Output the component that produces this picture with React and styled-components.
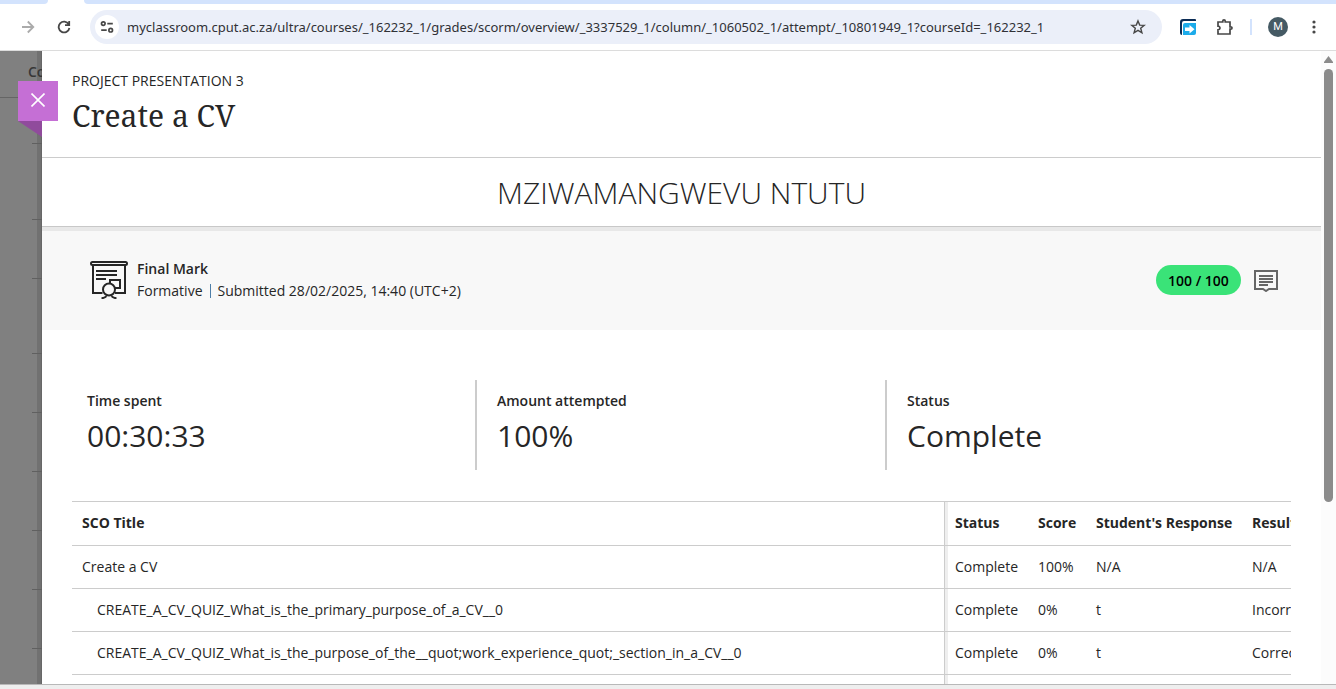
import React from "react";
import styled, { createGlobalStyle, css } from "styled-components";

const GlobalStyle = createGlobalStyle`
  *, *::before, *::after { box-sizing: border-box; }
  body { margin: 0; background: #fff; color: #262626; font: 14px/20px "Open Sans", sans-serif; overflow: hidden; }
  h1, h2, p, dl, dt, dd { margin: 0; font-weight: 400; }
  button { border: 0; padding: 0; background: none; font: inherit; color: inherit; cursor: pointer; }
`;

const Window = styled.div`
  display: flex;
  flex-direction: column;
  height: 100vh;
`;

/* Browser bar */
const TabStrip = styled.div`
  height: 4px;
  flex: none;
  display: flex;
  gap: 36px;
  background: #fff;
`;
const TabEdge = styled.div`
  height: 4px;
  background: #d3e3fd;
  ${(p) => (p.$fill ? css`flex: 1; border-bottom-left-radius: 4px;` : css`width: 48px; border-bottom-right-radius: 4px;`)}
`;
const Toolbar = styled.header`
  height: 47px;
  flex: none;
  display: flex;
  align-items: center;
  padding: 0 10px 0 16px;
  border-bottom: 1px solid #dcdcdc;
  background: #fff;
  color: #474747;
`;
const IconButton = styled.button`
  display: grid;
  place-items: center;
  flex: none;
  width: 24px;
  height: 24px;
  margin-left: ${(p) => p.$gap || 0}px;
  color: ${(p) => p.$color || "#474747"};
`;
const Address = styled.div`
  flex: 1;
  min-width: 0;
  height: 34px;
  margin-left: 14px;
  padding: 0 12px 0 5px;
  display: flex;
  align-items: center;
  border-radius: 17px;
  background: #ebeff9;
`;
const SiteInfo = styled(IconButton)`
  border-radius: 50%;
  background: #fff;
`;
const Url = styled.input`
  flex: 1;
  min-width: 0;
  margin: 0 0 0 8px;
  padding: 0;
  border: 0;
  outline: 0;
  background: none;
  color: #303136;
  font: 13px/20px "Noto Sans", sans-serif;
`;
const Separator = styled.span`
  width: 2px;
  height: 16px;
  margin-left: 13px;
  background: #d3e3fd;
`;
const Avatar = styled.button`
  width: 20px;
  height: 20px;
  margin-left: 16px;
  border-radius: 50%;
  background: #455a64;
  color: #fff;
  font: 400 11px/20px Roboto, sans-serif;
`;

/* Page behind the panel */
const Stage = styled.div`
  position: relative;
  flex: 1;
  min-height: 0;
  display: flex;
`;
const Behind = styled.aside`
  width: 42px;
  flex: none;
  overflow: hidden;
  background: linear-gradient(90deg, #808080 37px, #717171 37px, #717171 41px, #676767 41px);
`;
const BehindHeader = styled.div`
  height: 47px;
  padding: 11px 0 0 28px;
  border-bottom: 1px solid #656565;
  color: #373737;
  font-weight: 600;
  white-space: nowrap;
`;
const BehindRow = styled.div`
  height: ${(p) => p.$height}px;
  margin-left: 32px;
  border-bottom: 1px solid #606060;
`;

/* Panel */
const Panel = styled.main`
  flex: 1;
  min-width: 0;
  overflow: hidden;
  background: #fff;
`;
const CloseTab = styled.button`
  position: absolute;
  left: 18px;
  top: 30px;
  width: 40px;
  height: 40px;
  padding-bottom: 2px;
  display: grid;
  place-items: center;
  background: #c56fd5;
  color: #fff;
  &::after {
    content: "";
    position: absolute;
    left: 0;
    top: 40px;
    width: 24px;
    height: 16px;
    background: #904b9c;
    clip-path: polygon(0 0, 100% 0, 100% 100%);
  }
`;
const PanelHeader = styled.header`
  height: 107px;
  padding: 20px 30px 0;
  border-bottom: 1px solid #ccc;
`;
const Title = styled.h1`
  font: 30px/40px "Noto Serif", "DejaVu Serif", serif;
  margin-top: 5px;
`;
const StudentName = styled.h2`
  height: 69px;
  border-bottom: 1px solid #c8c8c8;
  text-align: center;
  font-size: 30px;
  line-height: 70px;
  font-weight: 300;
`;
const MarkBar = styled.section`
  height: 103px;
  padding: 0 43px 2px 48px;
  display: flex;
  align-items: center;
  border-top: 4px solid #e8e8e8;
  background: #f8f8f8;
`;
const MarkText = styled.div`
  flex: 1;
  margin-left: 9px;
  line-height: 22px;
`;
const Strong = styled.p`
  font-weight: 600;
`;
const Meta = styled.p`
  display: flex;
  align-items: center;
`;
const Rule = styled.span`
  width: 1px;
  height: 14px;
  margin: 0 7px;
  background: #4d7ea8;
`;
const Score = styled.span`
  width: 85px;
  height: 30px;
  margin-right: 13px;
  border-radius: 15px;
  background: #3ae378;
  color: #000;
  font-weight: 600;
  line-height: 32px;
  text-align: center;
`;
const Stats = styled.dl`
  display: grid;
  grid-template-columns: repeat(3, 1fr);
  padding: 50px 25px 31px 24px;
`;
const Stat = styled.div`
  height: 90px;
  padding: 11px 0 0 21px;
  & + & { border-left: 2px solid #ccc; margin-left: -1px; padding-left: 20px; }
`;
const StatLabel = styled.dt`
  font-weight: 600;
`;
const StatValue = styled.dd`
  margin-top: 5px;
  font-size: 30px;
  line-height: 40px;
`;
const TableClip = styled.div`
  margin: 0 30px;
  overflow: hidden;
`;
const Table = styled.table`
  width: calc(100% + 60px);
  table-layout: fixed;
  border-collapse: separate;
  border-spacing: 0;
  border-top: 1px solid #ccc;
`;
const cell = css`
  height: 43px;
  padding: 0 10px;
  border-bottom: 1px solid #ccc;
  text-align: left;
  white-space: nowrap;
  &:first-child { border-right: 1px solid #ccc; box-shadow: 3px 0 0 #eee; }
`;
const Th = styled.th`
  ${cell}
  height: 44px;
  padding-bottom: 2px;
  width: ${(p) => (p.$width ? p.$width + "px" : "auto")};
  font-weight: 700;
`;
const Td = styled.td`
  ${cell}
  padding-left: ${(p) => (p.$nested ? 25 : 10)}px;
`;

const Scrollbar = styled.div`
  width: 15px;
  flex: none;
  display: flex;
  flex-direction: column;
  align-items: center;
  gap: 6px;
  padding-top: 5px;
  background: #fcfcfc;
`;
const Thumb = styled.div`
  width: 9px;
  height: 69%;
  border-radius: 5px;
  background: #8b8b8b;
`;
const WindowEdge = styled.footer`
  height: 5px;
  flex: none;
  border-top: 1px solid #b8b8b8;
  background: #eee;
`;

const Svg = ({ w = 16, h = w, box = `0 0 ${w} ${h}`, sw = 1.7, children }) => (
  <svg width={w} height={h} viewBox={box} fill="none" stroke="currentColor" strokeWidth={sw} aria-hidden="true">
    {children}
  </svg>
);

const rowsBehind = [46, 76, 59, 75, 59, 59, 59, 59, 59];

const stats = [
  ["Time spent", "00:30:33"],
  ["Amount attempted", "100%"],
  ["Status", "Complete"],
];

const columns = [
  ["SCO Title"],
  ["Status", 83],
  ["Score", 58],
  ["Student's Response", 156],
  ["Result", 109],
];

const results = [
  ["Create a CV", "Complete", "100%", "N/A", "N/A"],
  ["CREATE_A_CV_QUIZ_What_is_the_primary_purpose_of_a_CV__0", "Complete", "0%", "t", "Incorrect"],
  ["CREATE_A_CV_QUIZ_What_is_the_purpose_of_the__quot;work_experience_quot;_section_in_a_CV__0", "Complete", "0%", "t", "Correct"],
  ["", "", "", "", ""],
];

function BrowserBar() {
  return (
    <>
      <TabStrip><TabEdge /><TabEdge $fill /></TabStrip>
      <Toolbar>
        <IconButton aria-label="Forward" $color="#ababab">
          <Svg w={14} sw={1.8}><path d="M1 7h11M6.8 1.5 12.3 7l-5.5 5.5" /></Svg>
        </IconButton>
        <IconButton aria-label="Reload" $gap={12}>
          <Svg w={14} sw={1.8}><path d="M11.7 4.2A5.4 5.4 0 1 0 12.4 8M12.2 1v4.2H8" /></Svg>
        </IconButton>
        <Address>
          <SiteInfo aria-label="Site information">
            <Svg w={14} sw={1.7}>
              <circle cx="3.3" cy="3.6" r="1.8" /><path d="M7.3 3.6h5.5M1.2 10.2h5.5" /><circle cx="10.7" cy="10.2" r="1.8" />
            </Svg>
          </SiteInfo>
          <Url aria-label="Address" readOnly value="myclassroom.cput.ac.za/ultra/courses/_162232_1/grades/scorm/overview/_3337529_1/column/_1060502_1/attempt/_10801949_1?courseId=_162232_1" />
          <IconButton aria-label="Bookmark this page">
            <Svg w={16} sw={1.4}><path d="m8 1.9 1.7 4.2 4.5.3-3.5 2.9 1.2 4.5L8 11.3l-3.9 2.5 1.2-4.5-3.5-2.9 4.5-.3z" /></Svg>
          </IconButton>
        </Address>
        <IconButton aria-label="File transfer extension" $gap={14}>
          <svg width="16" height="16" viewBox="0 0 16 16" aria-hidden="true">
            <path d="M3 0h12a1 1 0 0 1 1 1v1H4a2 2 0 0 0-2 2v12a2 2 0 0 1-2-2V3a3 3 0 0 1 3-3z" fill="#0b2c55" />
            <path d="M5 4h11v10a2 2 0 0 1-2 2H3V6a2 2 0 0 1 2-2z" fill="#1cabea" />
            <path d="M5 8.500h4.500V6l5 4.300-5 4.200V12H5z" fill="#fff" />
          </svg>
        </IconButton>
        <IconButton aria-label="Extensions" $gap={13}>
          <Svg w={18} sw={1.7}><path d="M2 4h4.800V3a1.200 1.200 0 0 1 2.400 0v1H14v4.800h.8a1.200 1.200 0 0 1 0 2.400H14V16H2v-4.200c2.6 0 2.6-3.6 0-3.600z" /></Svg>
        </IconButton>
        <Separator />
        <Avatar aria-label="Profile">M</Avatar>
        <IconButton aria-label="Menu" $gap={14}>
          <svg width="4" height="14" viewBox="0 0 4 14" fill="#474747" aria-hidden="true">
            <circle cx="2" cy="2" r="1.6" /><circle cx="2" cy="7" r="1.6" /><circle cx="2" cy="12" r="1.6" />
          </svg>
        </IconButton>
      </Toolbar>
    </>
  );
}

export default function App() {
  return (
    <Window>
      <GlobalStyle />
      <BrowserBar />
      <Stage>
        <Behind>
          <BehindHeader>Co</BehindHeader>
          {rowsBehind.map((height, i) => <BehindRow key={i} $height={height} />)}
        </Behind>
        <Panel>
          <PanelHeader>
            <p>PROJECT PRESENTATION 3</p>
            <Title>Create a CV</Title>
          </PanelHeader>
          <StudentName>MZIWAMANGWEVU NTUTU</StudentName>
          <MarkBar>
            <Svg w={38} h={39} sw={2}>
              <rect x="1" y="2" width="36" height="3" rx="1.5" />
              <path d="M3 5.5V33h9.500M35 5.500V33H25M6 11h21M6 15h21M6 19h10M20 23v-3h10v8h-5" />
              <circle cx="19" cy="29.500" r="6" />
              <path d="M11.500 38.200c2-.1 4-.8 5-2M26.500 38.200c-2-.1-4-.8-5-2" />
            </Svg>
            <MarkText>
              <Strong>Final Mark</Strong>
              <Meta>Formative<Rule />Submitted 28/02/2025, 14:40 (UTC+2)</Meta>
            </MarkText>
            <Score>100 / 100</Score>
            <IconButton aria-label="View feedback" $color="#666">
              <Svg w={24} h={24} sw={2}>
                <path d="M1 3h22v18h-8l-3 2-3-2H1zM5 8h14M5 11h14M5 14h14M5 17h9" />
              </Svg>
            </IconButton>
          </MarkBar>
          <Stats>
            {stats.map(([label, value]) => (
              <Stat key={label}><StatLabel>{label}</StatLabel><StatValue>{value}</StatValue></Stat>
            ))}
          </Stats>
          <TableClip>
            <Table>
              <thead>
                <tr>{columns.map(([name, width]) => <Th key={name} scope="col" $width={width}>{name}</Th>)}</tr>
              </thead>
              <tbody>
                {results.map((row, r) => (
                  <tr key={r}>{row.map((text, c) => <Td key={c} $nested={r > 0 && c === 0}>{text}</Td>)}</tr>
                ))}
              </tbody>
            </Table>
          </TableClip>
        </Panel>
        <Scrollbar aria-hidden="true">
          <svg width="9" height="7" viewBox="0 0 9 7"><path d="M4.500 0 9 6v1H0V6z" fill="#8b8b8b" /></svg>
          <Thumb />
        </Scrollbar>
        <CloseTab aria-label="Close">
          <Svg w={14} sw={1.6}><path d="m.5.5 13 13M13.500.5l-13 13" /></Svg>
        </CloseTab>
      </Stage>
      <WindowEdge />
    </Window>
  );
}
